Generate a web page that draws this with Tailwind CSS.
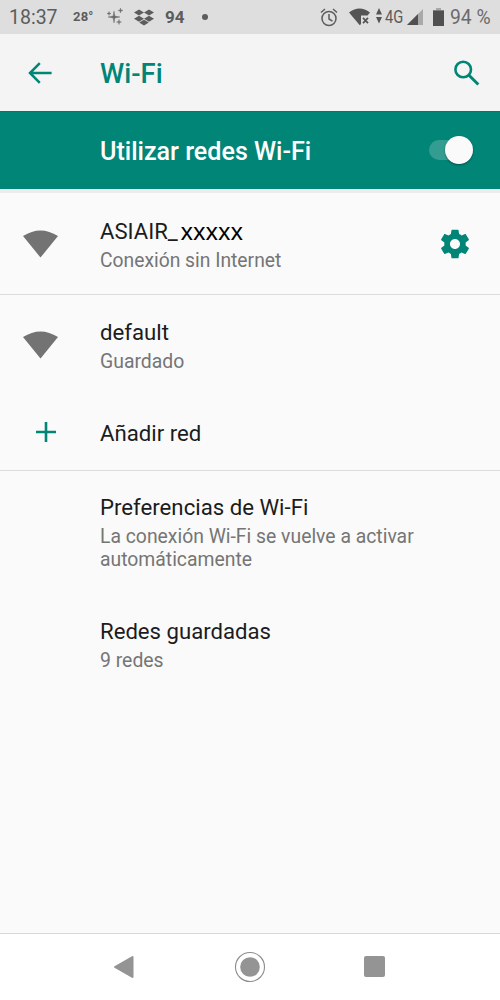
<!DOCTYPE html>
<html lang="es">
<head>
<meta charset="utf-8">
<title>Wi-Fi</title>
<script src="https://cdn.jsdelivr.net/npm/@tailwindcss/browser@4"></script>
</head>
<body class="flex h-[1000px] w-[500px] flex-col overflow-hidden bg-[#fafafa] font-[Roboto,sans-serif] text-[#1c1c1c]">
  <!-- Status bar -->
  <header class="flex h-[34px] shrink-0 items-center bg-[#dedede] text-[#5c5c5c] whitespace-nowrap">
    <span class="ml-[9px] w-[64px] pt-px text-[19.500px] leading-[34px]">18:37</span>
    <span class="w-[34px] text-[13px] leading-[34px] font-bold tracking-[0.2px]">28°</span>
    <svg class="h-[18px] w-[16px]" viewBox="0 0 16 18" fill="#6a6a6a" stroke="#6a6a6a" stroke-width="0.400"><path d="M7 3l.9 5.100L13 9l-5.100.9L7 15l-.9-5.100L1 9l5.100-.9zM13.500 0l.5 2 2 .5-2 .5-.5 2-.5-2-2-.5 2-.5zM12 11.500l.5 2 2 .5-2 .5-.5 2-.5-2-2-.5 2-.5zM2 3.500l.4 1.600 1.600.4-1.600.4L2 7.500l-.4-1.600L0 5.500l1.600-.4z"/></svg>
    <svg class="ml-[11px] h-[17px] w-[20px]" viewBox="0 0 20 17" fill="#5c5c5c"><path d="M5 .5l5 3-5 3-5-3zM15 .5l5 3-5 3-5-3zM5 6.800l5 3-5 3-5-3zM15 6.800l5 3-5 3-5-3zM10 10.700l4.800 2.900L10 16.500l-4.800-2.900z"/></svg>
    <span class="ml-[11px] w-[37px] text-[17px] leading-[34px] font-bold">94</span>
    <span class="size-[6px] rounded-full bg-[#5c5c5c]"></span>
    <svg class="ml-[112px] h-[19px] w-[18px]" viewBox="0 0 18 19" fill="none" stroke="#5c5c5c" stroke-width="1.500"><circle cx="9" cy="10.500" r="7"/><path d="M9 6v5l3.500 2.200M1 4.500L5 1M17 4.500L13 1"/></svg>
    <svg class="ml-[11px] h-[18px] w-[21px]" viewBox="0 0 21 18" fill="#555"><path d="M0 4.500Q10.500-3.500 21 4.500L18.500 7.500H12V16L10.800 17.300z"/><path d="M14 9.800l5 5.400M19 9.800l-5 5.400" stroke="#555" stroke-width="1.700"/></svg>
    <svg class="mb-[2px] ml-[6px] h-[16px] w-[6px]" viewBox="0 0 6 16" fill="#555"><path d="M3 0l3 6.500H0zM3 15.500L0 9h6z"/></svg>
    <span class="ml-[3px] w-[21px] origin-left scale-x-[0.84] text-[17.500px] leading-[34px]">4G</span>
    <svg class="ml-px h-[16px] w-[16px]" viewBox="0 0 16 16"><path d="M0 16L16 0v16z" fill="#a9a9a9"/><path d="M0 16L11 5v11z" fill="#505050"/></svg>
    <svg class="ml-[10px] h-[18px] w-[11px]" viewBox="0 0 11 18"><path d="M3 0h5v2h3v2H0V2h3z" fill="#a9a9a9"/><path d="M0 2.500h11V18H0z" fill="#505050"/></svg>
    <span class="ml-[6px] pt-px text-[19.300px] leading-[34px] text-[#6a6a6a]">94 %</span>
  </header>

  <!-- App bar -->
  <div class="flex h-[77px] shrink-0 items-center bg-[#f4f4f4] text-[#018577]">
    <svg class="ml-[28px] h-[22px] w-[24px]" viewBox="0 0 24 22" fill="none" stroke="currentColor" stroke-width="2.500"><path d="M23.600 11H2M11.800 1.200L2 11l9.800 9.800"/></svg>
    <h1 class="ml-[48px] pt-[3px] text-[27.500px] leading-[36px] font-medium">Wi-Fi</h1>
    <svg class="mr-[20px] ml-auto h-[26px] w-[26px]" viewBox="0 0 26 26" fill="none" stroke="currentColor"><circle cx="9.200" cy="9.500" r="7.800" stroke-width="2.600"/><path d="M15 15.300l9.300 9.200" stroke-width="3"/></svg>
  </div>

  <!-- Main switch -->
  <div class="flex h-[78px] shrink-0 items-center bg-[#018577] shadow-[inset_0_1px_0_#017a6d]">
    <h2 class="ml-[100px] pt-[4px] text-[25.100px] leading-[36px] font-medium text-white">Utilizar redes Wi-Fi</h2>
    <div class="mr-[27px] ml-auto flex h-[20px] w-[44px] items-center justify-end rounded-full bg-[#349d92]">
      <div class="size-[28px] shrink-0 rounded-full bg-[#fafafa] shadow-[0_1px_2px_rgba(0,0,0,0.4)]"></div>
    </div>
  </div>
  <div class="h-[4px] shrink-0 bg-[#ececec]"></div>

  <main class="flex-1">
    <section class="h-[102px] border-b-[1.500px] border-[#dcdcdc]">
      <div class="flex">
        <div class="w-[100px] pt-[37px] pl-[23px]"><svg class="h-[28px] w-[35px]" viewBox="0 0 35 28" fill="#737373"><path d="M0 6Q17.500-5.200 35 6L17.500 27.500z"/></svg></div>
        <div class="pt-[23px]">
          <p class="flex h-[30px] text-[22.100px] leading-[30px]"><span class="w-[80.500px]">ASIAIR_</span><span class="font-[Noto_Sans,sans-serif] text-[23.700px] leading-[30px] text-black">xxxxx</span></p>
          <p class="mt-[3px] text-[19.300px] leading-[23px] text-[#757575]">Conexión sin Internet</p>
        </div>
        <svg class="mt-[36px] mr-[30px] ml-auto h-[30px] w-[30px]" viewBox="1.500 1.500 21 21" fill="#018577"><path d="M19.430 12.980c.04-.32.07-.64.07-.98s-.03-.66-.07-.98l2.110-1.650c.19-.15.24-.42.12-.64l-2-3.460c-.12-.22-.39-.3-.61-.22l-2.490 1c-.52-.4-1.080-.73-1.690-.98l-.38-2.650C14.460 2.180 14.250 2 14 2h-4c-.25 0-.46.18-.49.42l-.38 2.650c-.61.25-1.170.59-1.690.98l-2.490-1c-.23-.09-.49 0-.61.22l-2 3.460c-.13.22-.07.49.12.64l2.110 1.650c-.04.32-.07.65-.07.98s.03.66.07.98l-2.110 1.650c-.19.15-.24.42-.12.64l2 3.460c.12.22.39.3.61.22l2.490-1c.52.4 1.080.73 1.690.98l.38 2.650c.03.24.24.42.49.42h4c.25 0 .46-.18.49-.42l.38-2.650c.61-.25 1.170-.59 1.690-.98l2.490 1c.23.09.49 0 .61-.22l2-3.460c.12-.22.07-.49-.12-.64l-2.110-1.650zM12 15.500c-1.930 0-3.500-1.570-3.500-3.500s1.570-3.500 3.500-3.500 3.500 1.570 3.500 3.500-1.570 3.500-3.500 3.500z"/></svg>
      </div>
    </section>

    <section class="h-[176px] border-b-[1.500px] border-[#dcdcdc]">
      <div class="flex h-[101px]">
        <div class="w-[100px] pt-[36px] pl-[23px]"><svg class="h-[28px] w-[35px]" viewBox="0 0 35 28" fill="#737373"><path d="M0 6Q17.500-5.200 35 6L17.500 27.500z"/></svg></div>
        <div class="pt-[22px]">
          <p class="text-[22.200px] leading-[30px]">default</p>
          <p class="mt-[3px] text-[19.400px] leading-[23px] text-[#757575]">Guardado</p>
        </div>
      </div>
      <div class="flex">
        <div class="w-[100px] pt-[26px] pl-[36px]"><svg class="size-[20px]" viewBox="0 0 20 20" stroke="#018577" stroke-width="2.600"><path d="M10 0v20M0 10h20"/></svg></div>
        <p class="pt-[22px] text-[22.200px] leading-[30px]">Añadir red</p>
      </div>
    </section>

    <section class="pt-[21px] pl-[100px]">
      <p class="text-[22.200px] leading-[30px]">Preferencias de Wi-Fi</p>
      <p class="mt-[3px] text-[19.350px] leading-[23px] text-[#757575]">La conexión Wi-Fi se vuelve a activar<br>automáticamente</p>
      <p class="mt-[45px] text-[22.150px] leading-[30px]">Redes guardadas</p>
      <p class="mt-[3px] text-[19.400px] leading-[23px] text-[#757575]">9 redes</p>
    </section>
  </main>

  <!-- Navigation bar -->
  <nav class="flex h-[67px] shrink-0 items-center border-t-[1.500px] border-[#d8d8d8] bg-white pb-px">
    <svg class="ml-[113px] h-[24px] w-[22px]" viewBox="0 0 22 24" fill="#949494" stroke="#949494" stroke-width="2" stroke-linejoin="round"><path d="M2 12L19.500 2v20z"/></svg>
    <svg class="ml-[99px] size-[32px]" viewBox="0 0 32 32"><circle cx="16" cy="16" r="14.500" fill="none" stroke="#8c8c8c" stroke-width="1.100"/><circle cx="16" cy="16" r="9.800" fill="#949494"/></svg>
    <div class="ml-[98px] size-[21px] rounded-[2px] bg-[#949494]"></div>
  </nav>
</body>
</html>
